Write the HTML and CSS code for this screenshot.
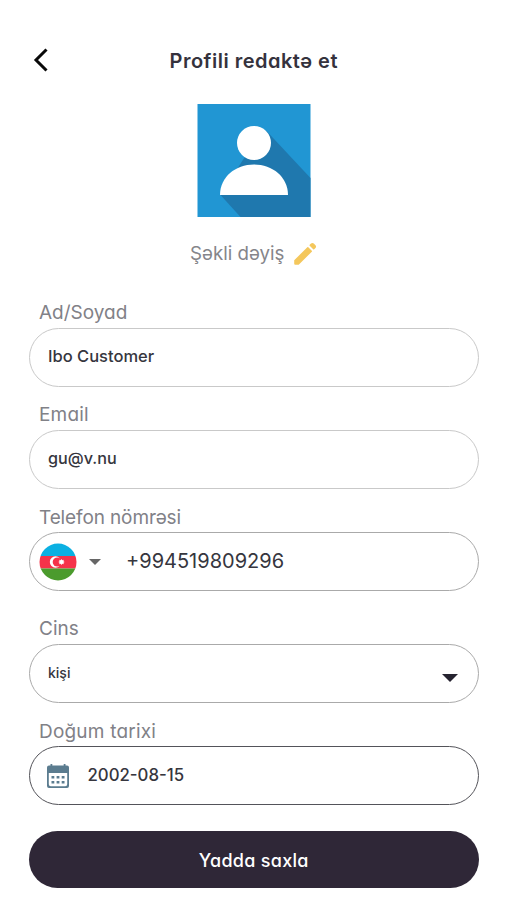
FILE: index.html
```html
<!DOCTYPE html>
<html lang="az">
<head>
<meta charset="utf-8">
<meta name="viewport" content="width=device-width, initial-scale=1">
<title>Profili redaktə et</title>
<link rel="stylesheet" href="styles.css">
</head>
<body>
<main class="screen">
  <header class="topbar">
    <svg class="back" viewBox="0 0 16 26"><path d="M13.5 2.500 3 13l10.500 10.500"/></svg>
    <h1 class="title">Profili redaktə et</h1>
  </header>
  <section class="photo">
    <svg class="avatar" viewBox="0 0 113 113">
      <path fill="#2196d3" d="M0 0h113v113H0z"/>
      <path fill="#1f78ae" d="M69 27 113 74v39H43L23 91 46 55z"/>
      <circle cx="56.500" cy="39" r="17" fill="#fff"/>
      <path fill="#fff" d="M22.500 91C22.500 73 38 60.500 56.500 60.500S90.500 73 90.500 91z"/>
    </svg>
    <div class="change">
      <span class="change-text">Şəkli dəyiş</span>
      <svg class="pencil" viewBox="0 0 24 24"><path d="M1.200 18.300 14.300 5.200q.5-.5 1 0l3.500 3.500q.5.500 0 1L5.700 22.800H2.200q-1 0-1-1zM22.500 6c.8-.8.800-2 0-2.800l-1.700-1.700c-.8-.8-2-.8-2.800 0l-1.300 1.300q-.5.500 0 1l3.500 3.500q.5.500 1 0z"/></svg>
    </div>
  </section>
  <form class="form">
    <div class="group">
      <span class="label">Ad/Soyad</span>
      <div class="field"><span class="value v-name">Ibo Customer</span></div>
    </div>
    <div class="group">
      <span class="label l-email">Email</span>
      <div class="field"><span class="value v-email">gu@v.nu</span></div>
    </div>
    <div class="group group-phone">
      <span class="label l-phone">Telefon nömrəsi</span>
      <div class="field mid phone">
        <svg class="flag" viewBox="0 0 38 38">
          <clipPath id="round"><circle cx="19" cy="19" r="18.500"/></clipPath>
          <g clip-path="url(#round)">
            <path fill="#0bb0e2" d="M0 0h38v13H0z"/>
            <path fill="#f5334a" d="M0 13h38v12.500H0z"/>
            <path fill="#4b9b2d" d="M0 25.500h38V38H0z"/>
          </g>
          <circle cx="16.500" cy="19" r="5.700" fill="#fff"/>
          <circle cx="18.300" cy="19" r="4.600" fill="#f5334a"/>
          <path fill="#fff" d="m22.500 16 .8 1.200 1.500-.4-.4 1.400 1.300.8-1.300.8.400 1.400-1.500-.4-.8 1.200-.8-1.200-1.500.4.400-1.400-1.300-.8 1.300-.8-.4-1.400 1.500.4z"/>
        </svg>
        <svg class="caret" viewBox="0 0 12 6"><path d="M0 0h12L6 6z"/></svg>
        <span class="value v-phone">+994519809296</span>
      </div>
    </div>
    <div class="group">
      <span class="label">Cins</span>
      <div class="field mid">
        <span class="value v-gender">kişi</span>
        <svg class="arrow" viewBox="0 0 16 8"><path d="M0 0h16L8 8z"/></svg>
      </div>
    </div>
    <div class="group">
      <span class="label l-birth">Doğum tarixi</span>
      <div class="field dark">
        <svg class="calendar" viewBox="0 0 24 26">
          <path fill="#5b7c8f" fill-rule="evenodd" d="M4.500 1h1.800v1.500h11.400V1h1.800v1.500H21a2 2 0 0 1 2 2V23a2 2 0 0 1-2 2H3a2 2 0 0 1-2-2V4.500a2 2 0 0 1 2-2h1.500zM2.800 10v11.300a2 2 0 0 0 2 2h14.400a2 2 0 0 0 2-2V10z"/>
          <path fill="#5b7c8f" d="M5.500 13h2.800v2.600H5.500zm5.100 0h2.800v2.600h-2.800zm5.100 0h2.800v2.600h-2.800zM5.500 18h2.800v2.600H5.500zm5.100 0h2.800v2.600h-2.800zm5.100 0h2.800v2.600h-2.800z"/>
        </svg>
        <span class="value v-date">2002-08-15</span>
      </div>
    </div>
    <button class="save" type="button"><span class="save-text">Yadda saxla</span></button>
  </form>
</main>
</body>
</html>
```

FILE: styles.css
```css
* { box-sizing: border-box; }
body {
  margin: 0;
  background: #fff;
  color: #36363e;
  font-family: Inter, "Open Sans", sans-serif;
  font-feature-settings: "cv11" 1;
}
svg { display: block; flex: none; }
.screen { height: 900px; padding: 0 28px 0 28.500px; overflow: hidden; }
.topbar {
  display: grid;
  grid-template-columns: 40px 1fr 40px;
  align-items: center;
  height: 74px;
  margin-top: 24px;
}
.back {
  width: 16px;
  height: 26px;
  margin: -3px 0 0 4px;
  fill: none;
  stroke: #090909;
  stroke-width: 3;
}
.title {
  margin: 0;
  font-size: 20px;
  font-weight: 600;
  letter-spacing: .5px;
  text-align: center;
  white-space: nowrap;
  color: #35323d;
}
.photo { display: flex; flex-direction: column; align-items: center; padding-top: 6px; }
.avatar { width: 114px; height: 113px; }
.change { display: flex; align-items: center; height: 24px; gap: 9px; margin-top: 24.500px; }
.change-text { font-size: 18.700px; color: #85858a; white-space: nowrap; }
.pencil { width: 24px; height: 24px; fill: #f4c75c; }
.form { margin-top: 34px; }
.group { height: 102.300px; }
.group-phone { height: 112px; }
.label {
  display: block;
  height: 28px;
  margin: 0 10.500px;
  font-size: 19px;
  line-height: 25px;
  color: #818187;
  white-space: nowrap;
}
.l-email { letter-spacing: .2px; }
.l-phone { letter-spacing: -.12px; }
.l-phone, .l-birth { padding-top: 1px; }
.l-birth { letter-spacing: .2px; }
.field {
  display: flex;
  align-items: center;
  height: 59px;
  padding: 0 20px 2px 18.500px;
  border: 1.500px solid #c9c9c9;
  border-radius: 30px;
}
.mid { border-color: #aaa; }
.dark { border-color: #54545a; }
.phone { padding-left: 9.500px; }
.value { font-size: 16.500px; font-weight: 500; white-space: nowrap; }
.flag { width: 38px; height: 38px; margin-top: 2px; }
.caret { width: 12px; height: 6px; margin: 3px 25px 0 12px; fill: #666; }
.v-email { font-size: 16.200px; }
.v-phone { font-size: 20px; font-weight: 400; }
.v-gender { font-size: 14px; }
.v-date { margin-top: 1px; font-size: 16.800px; }
.arrow { width: 16px; height: 8px; margin: 10px 0 0 auto; fill: #262330; }
.calendar { width: 24px; height: 26px; margin: 3px 17.500px 0 -2px; }
.save {
  display: flex;
  align-items: center;
  justify-content: center;
  width: 100%;
  height: 57px;
  margin-top: 10.500px;
  padding: 1px 0 0;
  border: 0;
  border-radius: 29px;
  background: #2f2737;
  color: #fff;
  font: 500 18px Inter, "Open Sans", sans-serif;
  font-feature-settings: "cv11" 1;
  letter-spacing: .3px;
}
```
